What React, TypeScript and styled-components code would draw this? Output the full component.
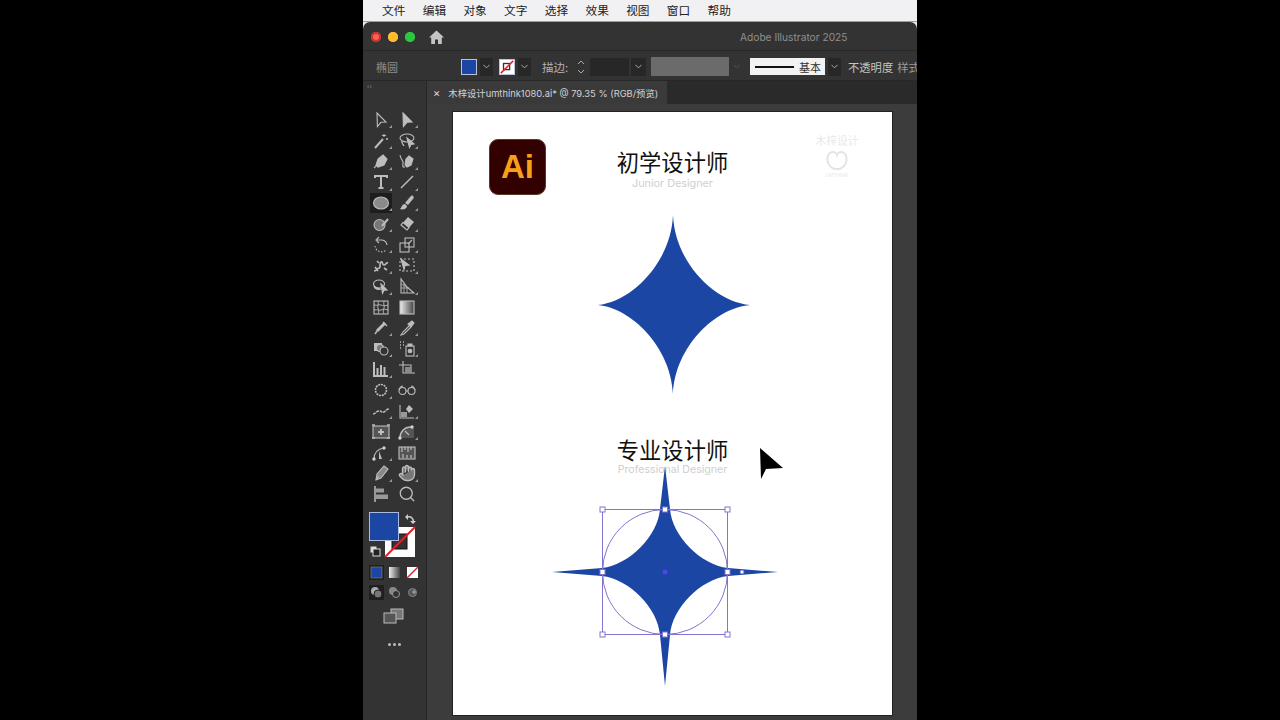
import React from 'react'
import styled, { createGlobalStyle } from 'styled-components'
import { Hand, Search, ChevronDown } from 'lucide-react'

const UI_FONT = `'Noto Sans CJK SC', 'Noto Sans', sans-serif`
const BLUE = '#1b46a3'
const SELECT = '#8474cf'

const GlobalStyle = createGlobalStyle`
  html, body { margin: 0; padding: 0; background: #000; }
  body { font-family: ${UI_FONT}; }
`

const menus = ['文件', '编辑', '对象', '文字', '选择', '效果', '视图', '窗口', '帮助']

// 18x18 drawings, left column then right column, row by row
const tools: { icon: React.ReactNode; flyout?: boolean; active?: boolean }[] = [
  { icon: <path d="M5 2l9 9-5 .3-3.6 4.2z" />, flyout: true },
  { icon: <path d="M5 2l9 9-5 .3-3.6 4.2z" fill="currentColor" />, flyout: true },
  { icon: <><path d="M3 16l8-9" strokeWidth="2" /><path d="M12 2v3M10 3.5h4M15 6v2M14 7h2" strokeWidth="1" /></>, flyout: true },
  { icon: <><ellipse cx="9" cy="6" rx="7" ry="4" /><path d="M4 9c-1 2 1 3 2 5M9 6l7 6-3 .5-1.500 3z" fill="currentColor" /></>, flyout: true },
  { icon: <><path d="M11 3l4 4-3 6-6 2-2-2 2-6z" fill="currentColor" /><path d="M2 16l4-4" /></>, flyout: true },
  { icon: <><path d="M11 4l4 3-2 6-4 2-2-2 1-6z" fill="currentColor" /><path d="M2 3c1 6 4 5 3 9s1 3 2 3" /></>, flyout: true },
  { icon: <path d="M3 5V3h12v2M9 3v12M6.500 15h5" strokeWidth="2" />, flyout: true },
  { icon: <path d="M3 15L15 3" strokeWidth="1.500" />, flyout: true },
  { icon: <ellipse cx="9" cy="9" rx="7.500" ry="6" fill="#8a8a8a" />, flyout: true, active: true },
  { icon: <><path d="M15 2c1 1 1 2 0 3l-5 6-3-2 5-6c1-1 2-2 3-1z" fill="currentColor" stroke="none" /><path d="M7 10c-3 0-3 3-5 5 3 1 7 0 7-3z" fill="currentColor" stroke="none" /></>, flyout: true },
  { icon: <><circle cx="7.500" cy="10" r="5.500" fill="#777" /><path d="M10 11l6-7" strokeWidth="2" /></>, flyout: true },
  { icon: <><path d="M10 2l6 5-7 8-6-5z" fill="currentColor" stroke="none" /><path d="M3 10l6 5 2-2.500-6-5z" fill="#333" /></>, flyout: true },
  { icon: <><path d="M5 4h5a6 6 0 0 1 5 5" /><path d="M7 1L4 4l3 3" /><path d="M3 10a6.500 6.500 0 0 0 11 4" strokeDasharray="1.500 1.500" /></>, flyout: true },
  { icon: <><rect x="2" y="7" width="9" height="9" /><rect x="7" y="2" width="9" height="9" /><path d="M10 8l4-4" /></>, flyout: true },
  { icon: <path d="M2 15c3 0 3-3 5-3s0-5 2-6 1 3 3 3 2-3 4-2M5 5l2 2M12 12l3 2M3 11l3 4" strokeWidth="1.700" />, flyout: true },
  { icon: <><rect x="2" y="3" width="14" height="12" strokeDasharray="2 2" /><path d="M3 3l8 6-4 .5-1 4z" fill="currentColor" /></>, flyout: true },
  { icon: <><ellipse cx="7" cy="7" rx="5.500" ry="4" /><path d="M2 9c0 3 4 4 7 3M9 7l6 6-3 .3-1.500 3z" fill="currentColor" /></>, flyout: true },
  { icon: <><path d="M3 2v14h13L9 10 3 2z" /><path d="M3 7l6 3M3 11h8M6 6v10M9 10v6" strokeWidth=".8" /></>, flyout: true },
  { icon: <><rect x="2" y="3" width="14" height="13" /><path d="M2 7c4 1 5-1 7 0s4 1 7 0M2 12c4-1 5 1 7 0s4-1 7 0M6 3c1 4-1 5 0 7s1 4 0 6M12 3c-1 4 1 5 0 7s-1 4 0 6" strokeWidth=".9" /></>, flyout: false },
  { icon: <rect x="2" y="3" width="14" height="13" fill="url(#toolGradient)" />, flyout: false },
  { icon: <><path d="M13 4l-8 8" strokeWidth="3" /><path d="M3 15l2-3M11 3l4 4" strokeWidth="1.400" /></>, flyout: true },
  { icon: <><path d="M12 6L5 13l-2 3 3-1 7-7" /><path d="M10 5l3 3 3-4-2-2z" fill="currentColor" /></>, flyout: true },
  { icon: <><rect x="2" y="3" width="8" height="8" fill="currentColor" stroke="none" /><circle cx="8" cy="8" r="3.500" fill="#777" /><circle cx="12" cy="11" r="4" fill="#333" /></>, flyout: true },
  { icon: <><rect x="8" y="6" width="8" height="10" /><circle cx="12" cy="11" r="1.800" fill="currentColor" /><path d="M10 4h4v2h-4z" fill="currentColor" /><path d="M2 2h1M5 2h1M2 5h1M5 5h1M2 8h1" strokeWidth="1.500" /></>, flyout: true },
  { icon: <path d="M2 2v14h14M5.500 15V8M9 15V5M12.500 15V7" strokeWidth="2" />, flyout: true },
  { icon: <><path d="M5 1v12h12M1 5h12v8" /><path d="M7 7h6v6H7z" fill="#8a8a8a" stroke="none" /></>, flyout: false },
  { icon: <circle cx="9" cy="9" r="5.500" strokeWidth="1.600" strokeDasharray="2 .8" />, flyout: true },
  { icon: <><circle cx="4.500" cy="10" r="3.500" /><circle cx="13.500" cy="10" r="3.500" /><path d="M1 9c1-3 3-4 4-4M8 10h2M17 9c-1-3-3-4-4-4" /></>, flyout: false },
  { icon: <path d="M1 12c3 0 3-3 6-3s3 2 5 1 2-3 5-3" strokeWidth="1.400" strokeDasharray="3 .7" />, flyout: true },
  { icon: <><path d="M2 3v13h14" /><rect x="3" y="10" width="6" height="5" fill="#999" stroke="none" /><path d="M11 3l4 4-4 4-3-4z" fill="currentColor" stroke="none" /></>, flyout: true },
  { icon: <><rect x="1" y="3" width="16" height="12" fill="#555" /><path d="M9 6v6M6 9h6" strokeWidth="2" /><path d="M0 2h3M15 2h3M0 15h3M15 15h3" strokeWidth="1.500" /></>, flyout: false },
  { icon: <><path d="M2 15h14V5H9C5 5 2 9 2 15z" fill="#555" stroke="none" /><path d="M2 15c0-6 4-11 11-11" strokeWidth="1.400" /><path d="M7 8l4 4" /><circle cx="14" cy="4" r="1.200" fill="#fff" /><circle cx="2" cy="15" r="1.200" fill="#fff" /></>, flyout: true },
  { icon: <><path d="M2 15c0-6 4-10 10-11" /><path d="M7 7v8h3z" fill="currentColor" stroke="none" /><circle cx="12" cy="4" r="1.200" fill="#fff" /><circle cx="2" cy="15" r="1.200" fill="#fff" /></>, flyout: true },
  { icon: <><rect x="1" y="3" width="16" height="12" fill="#555" /><path d="M4 3v5M7 3v3M10 3v5M13 3v3M5 10v4M9 11v3M13 11v3" strokeWidth="1.200" /></>, flyout: false },
  { icon: <><path d="M12 2l4 3-7 9-5 2 1-6z" fill="#888" /><path d="M4 16l3-4" /></>, flyout: true },
  { icon: <Hand x={0} y={0} width={18} height={18} fill="#777" strokeWidth={1.800} />, flyout: true },
  { icon: <><path d="M3 1v16" strokeWidth="1.500" /><rect x="4" y="3.500" width="8" height="4" fill="#999" stroke="none" /><rect x="4" y="9.500" width="12" height="4.500" fill="#999" stroke="none" /></>, flyout: false },
  { icon: <Search x={0} y={0} width={18} height={18} strokeWidth={1.700} />, flyout: false },
]

const Page = styled.div`
  width: 1280px;
  height: 720px;
  background: #000;
  display: flex;
  justify-content: center;
  overflow: hidden;
`
const Screen = styled.div`
  width: 554px;
  height: 720px;
  display: flex;
  flex-direction: column;
  background: #e9e9ec;
  overflow: hidden;
`
const MenuBar = styled.div`
  height: 19px;
  padding: 0 0 2px 19px;
  flex: none;
  display: flex;
  align-items: center;
  gap: 17px;
  background: #f1f1f4;
  border-bottom: 1px solid #9d9d9f;
`
const MenuItem = styled.span`
  font-size: 11.700px;
  color: #222;
  width: 23.700px;
  white-space: nowrap;
`
const AppFrame = styled.div`
  flex: 1;
  min-height: 0;
  display: flex;
  flex-direction: column;
  background: #333;
  border-radius: 7px 7px 0 0;
`
const TitleBar = styled.div`
  height: 26px;
  padding: 2px 0 0 8px;
  flex: none;
  display: flex;
  align-items: center;
  border-bottom: 1px solid #272727;
`
const Light = styled.span<{ $color: string; $ring: string }>`
  width: 10px;
  height: 10px;
  margin-right: 7px;
  border-radius: 50%;
  background: ${(p) => p.$color};
  box-shadow: inset 0 0 0 2px ${(p) => p.$ring};
`
const HomeIcon = styled.svg`
  width: 17px;
  height: 17px;
  margin-left: 6px;
  color: #c4c4c4;
`
const AppTitle = styled.span`
  margin-left: 295px;
  font-family: 'Inter', 'Liberation Sans', sans-serif;
  font-size: 10.200px;
  color: #8f8f8f;
  white-space: nowrap;
`
const ControlBar = styled.div`
  height: 27px;
  padding: 2px 0 0 13px;
  flex: none;
  display: flex;
  align-items: center;
  white-space: nowrap;
  border-bottom: 1px solid #272727;
`
const ObjectName = styled.span`
  width: 85px;
  flex: none;
  font-size: 11px;
  color: #8c8c8c;
`
const Swatch = styled.span<{ $fill: string }>`
  width: 16px;
  height: 16px;
  flex: none;
  box-sizing: border-box;
  border: 1px solid #b8c3dc;
  background: ${(p) => p.$fill};
  display: flex;
`
const Caret = styled.span<{ $width?: number; $left?: number; $dim?: boolean }>`
  width: ${(p) => p.$width ?? 13}px;
  height: 18px;
  flex: none;
  margin-left: ${(p) => p.$left ?? 3}px;
  background: ${(p) => (p.$dim ? 'transparent' : '#272727')};
  color: ${(p) => (p.$dim ? '#555' : '#b5b5b5')};
  display: flex;
  align-items: center;
  justify-content: center;
`
const StrokeLabel = styled.span`
  margin-left: 11px;
  width: 33px;
  flex: none;
  font-size: 11.500px;
  color: #b4b4b4;
`
const Spinner = styled.svg`
  width: 12px;
  height: 18px;
  flex: none;
  color: #aaa;
`
const StrokeInput = styled.span`
  width: 39px;
  height: 18px;
  margin-left: 3px;
  flex: none;
  background: #272727;
`
const GreyField = styled.span`
  width: 78px;
  height: 19px;
  margin-left: 5px;
  flex: none;
  background: #6b6b6b;
`
const BrushBox = styled.span`
  width: 75px;
  height: 17px;
  flex: none;
  margin-left: 7px;
  background: #f2f2f2;
  display: flex;
  align-items: center;
  padding-left: 5px;
  box-sizing: border-box;
  gap: 5px;
`
const BrushLine = styled.span`
  width: 39px;
  height: 2px;
  background: #111;
`
const BrushName = styled.span`
  font-size: 11px;
  color: #333;
`
const PanelLink = styled.span<{ $left: number; $dim?: boolean }>`
  margin-left: ${(p) => p.$left}px;
  flex: none;
  font-size: 11.300px;
  color: ${(p) => (p.$dim ? '#9a9a9a' : '#c4c4c4')};
`
const Workspace = styled.div`
  flex: 1;
  min-height: 0;
  display: flex;
`
const ToolPanel = styled.div`
  width: 64px;
  flex: none;
  box-sizing: border-box;
  background: #333;
  display: flex;
  flex-direction: column;
  padding-left: 5px;
  border-right: 1px solid #262626;
`
const PanelHeader = styled.div`
  height: 28.500px;
  flex: none;
  font-size: 8px;
  line-height: 9px;
  color: #888;
  margin-left: -1px;
`
const ToolGrid = styled.div`
  display: grid;
  grid-template-columns: 26px 26px;
  grid-auto-rows: 20.800px;
`
const ToolButton = styled.div<{ $flyout?: boolean; $active?: boolean }>`
  position: relative;
  display: flex;
  align-items: center;
  justify-content: center;
  width: 22px;
  margin-left: 2px;
  color: #bdbdbd;
  background: ${(p) => (p.$active ? '#1d1d1d' : 'transparent')};
  &::after {
    content: '';
    display: ${(p) => (p.$flyout ? 'block' : 'none')};
    position: absolute;
    right: 0;
    bottom: 2px;
    border-left: 3px solid transparent;
    border-bottom: 3px solid #999;
  }
`
const ToolSvg = styled.svg`
  width: 18px;
  height: 18px;
  fill: none;
  stroke: currentColor;
  stroke-width: 1.100;
  overflow: visible;
`
const ColorWell = styled.svg`
  width: 50px;
  height: 50px;
  margin: 7px 0 0 1px;
  flex: none;
`
const ModeRow = styled.div<{ $top: number }>`
  display: flex;
  gap: 3px;
  margin: ${(p) => p.$top}px 0 0 1px;
  flex: none;
`
const ModeCell = styled.span<{ $on?: boolean }>`
  width: 15px;
  height: 15px;
  display: flex;
  align-items: center;
  justify-content: center;
  background: ${(p) => (p.$on ? '#1f1f1f' : 'transparent')};
`
const MiniSvg = styled.svg`
  width: 13px;
  height: 13px;
`
const ScreenMode = styled.svg`
  width: 22px;
  height: 16px;
  margin: 8px 0 0 15px;
  flex: none;
`
const MoreDots = styled.div`
  margin: 19px 0 0 20px;
  display: flex;
  gap: 2px;
  flex: none;
`
const MoreDot = styled.span`
  width: 3px;
  height: 3px;
  border-radius: 50%;
  background: #bbb;
`
const DocArea = styled.div`
  flex: 1;
  min-width: 0;
  display: flex;
  flex-direction: column;
`
const TabBar = styled.div`
  height: 23px;
  flex: none;
  background: #2a2a2a;
  display: flex;
`
const Tab = styled.div`
  width: 240px;
  display: flex;
  align-items: center;
  background: #3a3a3a;
  padding-left: 6px;
  box-sizing: border-box;
  color: #d2d2d2;
  font-family: 'Inter', 'Noto Sans CJK SC', sans-serif;
  font-size: 9.350px;
  white-space: nowrap;
`
const TabClose = styled.span`
  margin-right: 8px;
  font-size: 11px;
  color: #ddd;
`
const Canvas = styled.div`
  flex: 1;
  min-height: 0;
  background: #3c3c3c;
  padding: 8px 0 0 26px;
`
const Artboard = styled.div`
  position: relative;
  width: 439px;
  height: 603px;
  background: #fff;
  box-shadow: 0 0 0 1px #222;
`
const Heading = styled.div<{ $top: number }>`
  position: absolute;
  left: 0;
  width: 439px;
  top: ${(p) => p.$top}px;
  text-align: center;
  font-size: 22.300px;
  font-weight: 400;
  line-height: 30px;
  color: #111;
`
const SubHeading = styled.div<{ $top: number; $size: number }>`
  position: absolute;
  left: 0;
  width: 439px;
  top: ${(p) => p.$top}px;
  text-align: center;
  font-family: 'Inter', 'Liberation Sans', sans-serif;
  font-size: ${(p) => p.$size}px;
  line-height: 14px;
  color: #cfcfcf;
`
const AiBadge = styled.div`
  position: absolute;
  left: 36px;
  top: 27px;
  width: 57px;
  height: 56px;
  border-radius: 9px;
  background: #330000;
  border: 1px solid #5a3a2a;
  box-sizing: border-box;
  color: #f7a11b;
  font-family: 'Liberation Sans', sans-serif;
  font-weight: 700;
  font-size: 33px;
  display: flex;
  align-items: center;
  justify-content: center;
`
const Watermark = styled.div`
  position: absolute;
  left: 362px;
  top: 21px;
  width: 44px;
  display: flex;
  flex-direction: column;
  align-items: center;
  color: #e9e9e9;
  font-size: 10.800px;
  line-height: 15px;
`
const WatermarkHeart = styled.svg`
  width: 24px;
  height: 22px;
  margin-top: 2px;
`
const WatermarkName = styled.span`
  font-family: 'Liberation Sans', sans-serif;
  font-size: 5px;
  line-height: 7px;
`
const Drawing = styled.svg`
  position: absolute;
  left: 0;
  top: 0;
  width: 439px;
  height: 603px;
  overflow: visible;
  pointer-events: none;
`

const Handle = ({ x, y }: { x: number; y: number }) => (
  <rect x={x - 2.5} y={y - 2.5} width={5} height={5} fill="#fff" stroke={SELECT} strokeWidth={1} />
)

const App = () => {
  return (
    <Page>
      <GlobalStyle />
      <Screen>
        <MenuBar>
          {menus.map((m) => (
            <MenuItem key={m}>{m}</MenuItem>
          ))}
        </MenuBar>
        <AppFrame>
          <TitleBar>
            <Light $color="#ff5f57" $ring="#c9342c" />
            <Light $color="#febc2e" $ring="#febc2e" />
            <Light $color="#2ac840" $ring="#2ac840" />
            <HomeIcon viewBox="0 0 17 17">
              <path d="M8.500 1.500L1 8.500h2.200V15h3.800v-4.500h3V15h3.800V8.500H16z" fill="currentColor" />
            </HomeIcon>
            <AppTitle>Adobe Illustrator 2025</AppTitle>
          </TitleBar>
          <ControlBar>
            <ObjectName>椭圆</ObjectName>
            <Swatch $fill={BLUE} />
            <Caret>
              <ChevronDown size={11} />
            </Caret>
            <Caret $width={6} $left={0} $dim />
            <Swatch $fill="#fff">
              <svg viewBox="0 0 16 16" width="14" height="14">
                <rect x="4" y="4" width="7" height="7" fill="none" stroke="#333" strokeWidth="1.500" />
                <path d="M1 15L15 1" stroke="#e0202a" strokeWidth="1.800" />
              </svg>
            </Swatch>
            <Caret>
              <ChevronDown size={11} />
            </Caret>
            <StrokeLabel>描边:</StrokeLabel>
            <Spinner viewBox="0 0 12 18">
              <path d="M3 6l3-3 3 3M3 12l3 3 3-3" fill="none" stroke="currentColor" />
            </Spinner>
            <StrokeInput />
            <Caret $left={2} $width={15}>
              <ChevronDown size={11} />
            </Caret>
            <GreyField />
            <Caret $left={0} $width={14} $dim>
              <ChevronDown size={11} />
            </Caret>
            <BrushBox>
              <BrushLine />
              <BrushName>基本</BrushName>
            </BrushBox>
            <Caret>
              <ChevronDown size={11} />
            </Caret>
            <PanelLink $left={7}>不透明度</PanelLink>
            <PanelLink $left={4} $dim>样式</PanelLink>
          </ControlBar>
          <Workspace>
            <ToolPanel>
              <PanelHeader>‹‹</PanelHeader>
              <ToolGrid>
                {tools.map((t, i) => (
                  <ToolButton key={i} $flyout={t.flyout} $active={t.active}>
                    <ToolSvg viewBox="0 0 18 18">
                      <defs>
                        <linearGradient id="toolGradient">
                          <stop offset="0" stopColor="#eee" />
                          <stop offset="1" stopColor="#444" />
                        </linearGradient>
                      </defs>
                      {t.icon}
                    </ToolSvg>
                  </ToolButton>
                ))}
              </ToolGrid>
              <ColorWell viewBox="0 0 50 50">
                <rect x="16" y="15" width="30" height="30" fill="#fff" />
                <rect x="23" y="22" width="15" height="15" fill="#333" stroke="#111" />
                <path d="M16 45L46 15" stroke="#e0202a" strokeWidth="2" />
                <rect x="0.500" y="0.500" width="29" height="28" fill={BLUE} stroke="#a9bce0" />
                <path d="M39 5a4 4 0 0 1 5 5" fill="none" stroke="#ccc" strokeWidth="1.500" />
                <path d="M36 5l3-3v6zM41 9h6l-3 3z" fill="#ccc" />
                <rect x="1" y="34" width="7" height="7" fill="#ddd" stroke="#333" />
                <rect x="4" y="37" width="7" height="7" fill="#222" stroke="#ddd" />
              </ColorWell>
              <ModeRow $top={3}>
                <ModeCell $on>
                  <MiniSvg viewBox="0 0 13 13">
                    <rect x="1" y="1" width="11" height="11" fill={BLUE} stroke="#888" strokeWidth=".6" />
                  </MiniSvg>
                </ModeCell>
                <ModeCell>
                  <MiniSvg viewBox="0 0 13 13">
                    <defs>
                      <linearGradient id="modeGradient">
                        <stop offset="0" stopColor="#eee" />
                        <stop offset="1" stopColor="#444" />
                      </linearGradient>
                    </defs>
                    <rect x="1" y="1" width="11" height="11" fill="url(#modeGradient)" />
                  </MiniSvg>
                </ModeCell>
                <ModeCell>
                  <MiniSvg viewBox="0 0 13 13">
                    <rect x="1" y="1" width="11" height="11" fill="#fff" />
                    <path d="M1 12L12 1" stroke="#e0202a" strokeWidth="1.500" />
                  </MiniSvg>
                </ModeCell>
              </ModeRow>
              <ModeRow $top={5}>
                <ModeCell $on>
                  <MiniSvg viewBox="0 0 13 13">
                    <circle cx="5" cy="5" r="4" fill="#aaa" />
                    <circle cx="8" cy="8" r="4" fill="#777" stroke="#222" />
                  </MiniSvg>
                </ModeCell>
                <ModeCell>
                  <MiniSvg viewBox="0 0 13 13">
                    <circle cx="5" cy="5" r="4" fill="#888" />
                    <circle cx="8" cy="8" r="3.500" fill="#333" stroke="#999" />
                  </MiniSvg>
                </ModeCell>
                <ModeCell>
                  <MiniSvg viewBox="0 0 13 13">
                    <circle cx="6.500" cy="6.500" r="4" fill="#555" stroke="#888" />
                    <circle cx="8" cy="6" r="1.800" fill="#999" />
                  </MiniSvg>
                </ModeCell>
              </ModeRow>
              <ScreenMode viewBox="0 0 22 16">
                <rect x="8" y="1" width="12" height="10" fill="#777" stroke="#bbb" />
                <rect x="1" y="5" width="12" height="10" fill="#555" stroke="#bbb" />
              </ScreenMode>
              <MoreDots>
                <MoreDot />
                <MoreDot />
                <MoreDot />
              </MoreDots>
            </ToolPanel>
            <DocArea>
              <TabBar>
                <Tab>
                  <TabClose>×</TabClose>
                  木梓设计umthink1080.ai* @ 79.35 % (RGB/预览)
                </Tab>
              </TabBar>
              <Canvas>
                <Artboard>
                  <AiBadge>Ai</AiBadge>
                  <Heading $top={34}>初学设计师</Heading>
                  <SubHeading $top={65} $size={10.800}>Junior Designer</SubHeading>
                  <Watermark>
                    木梓设计
                    <WatermarkHeart viewBox="0 0 24 22">
                      <path
                        d="M5 3c3-2 6-1 7 2 1-3 4-4 7-2 4 3 3 11-1 14-3 3-9 3-12 0C2 14 1 6 5 3z"
                        fill="none"
                        stroke="#e4e4e4"
                        strokeWidth="2"
                      />
                    </WatermarkHeart>
                    <WatermarkName>UMTHINK</WatermarkName>
                  </Watermark>
                  <Heading $top={322}>专业设计师</Heading>
                  <SubHeading $top={351} $size={10.600}>Professional Designer</SubHeading>
                  <Drawing viewBox="0 0 439 603">
                    <g transform="translate(220 193)" fill={BLUE}>
                      <path d="M0-90C-2-42-42-3-75 0C-42 3-2 42 0 89C2 42 42 3 77 0C42-3 2-42 0-90Z" />
                    </g>
                    <g transform="translate(212 460)">
                      <path
                        fill={BLUE}
                        d="M0-106L-5-63C-7-36-36-7-63-4L-113 0-63 4C-36 7-7 36-5 63L0 114 5 63C7 36 36 7 63 4L113 0 63-4C36-7 7-36 5-63Z"
                      />
                      <circle r="62.500" fill="none" stroke={SELECT} strokeWidth="1" />
                      <rect x="-62.500" y="-62.500" width="125" height="125" fill="none" stroke={SELECT} strokeWidth="1" />
                      <Handle x={-62.500} y={-62.500} />
                      <Handle x={0} y={-62.500} />
                      <Handle x={62.500} y={-62.500} />
                      <Handle x={-62.500} y={0} />
                      <Handle x={62.500} y={0} />
                      <Handle x={-62.500} y={62.500} />
                      <Handle x={0} y={62.500} />
                      <Handle x={62.500} y={62.500} />
                      <circle r="2.500" fill="#4f46e5" />
                      <circle cx="77" r="2" fill="#fff" stroke={SELECT} />
                    </g>
                    <path d="M307 336L330 356 313 357 308 367Z" fill="#000" />
                  </Drawing>
                </Artboard>
              </Canvas>
            </DocArea>
          </Workspace>
        </AppFrame>
      </Screen>
    </Page>
  )
}

export default App
